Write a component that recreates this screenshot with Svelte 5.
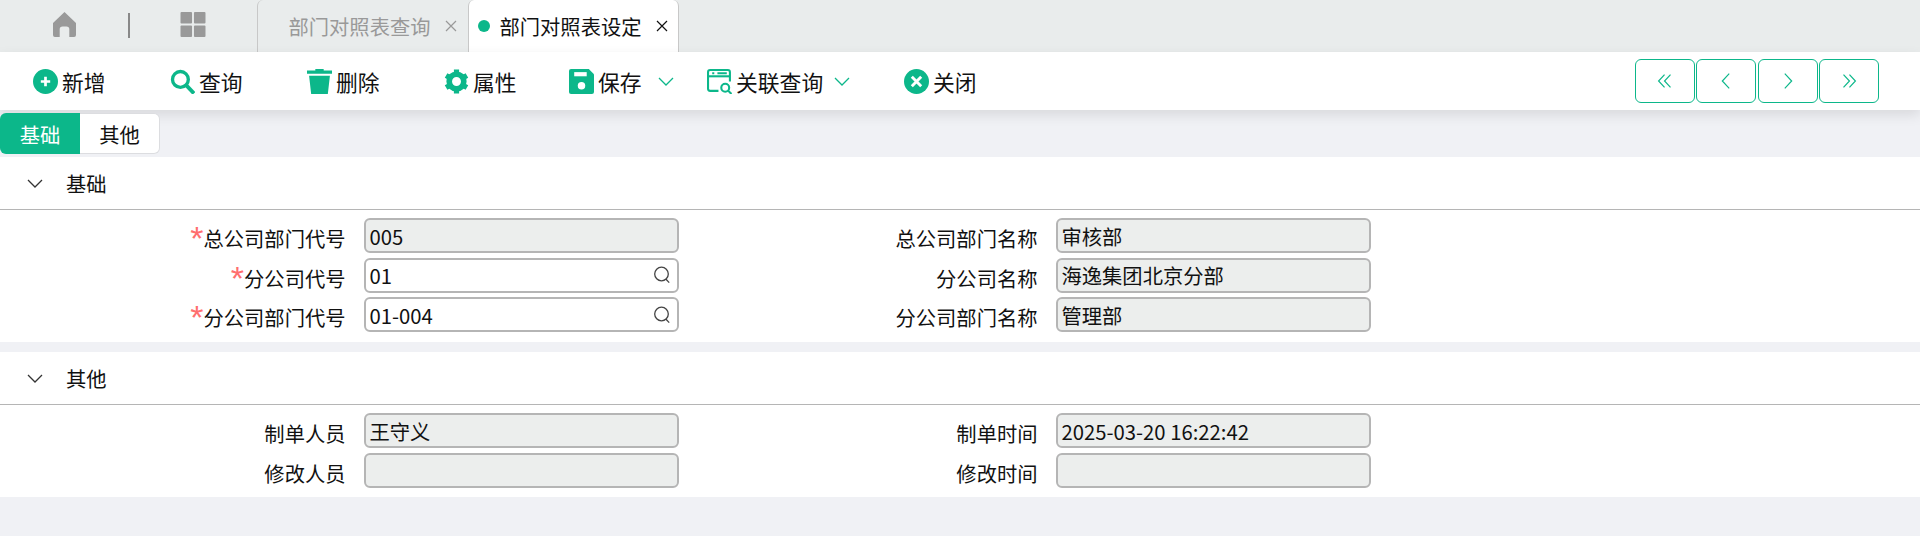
<script>
  // toolbar entries: width holds the slot each action takes in the bar
  const actions = [
    { key: 'add', label: '新增', width: 137 },
    { key: 'search', label: '查询', width: 137 },
    { key: 'trash', label: '删除', width: 137 },
    { key: 'gear', label: '属性', width: 125 },
    { key: 'save', label: '保存', width: 138, caret: true },
    { key: 'link', label: '关联查询', width: 197, caret: true },
    { key: 'close', label: '关闭', width: 90 },
  ]

  const pager = [
    'M11.5 5 5 12l6.5 7M18 5l-6.5 7 6.5 7',
    'M15.5 4 8 12l7.5 8',
    'M8.5 4l7.5 8-7.5 8',
    'M6 5l6.5 7L6 19M12.5 5l6.5 7-6.5 7',
  ]

  const baseFields = [
    { label: '总公司部门代号', value: '005', required: true, readonly: true },
    { label: '总公司部门名称', value: '审核部', readonly: true },
    { label: '分公司代号', value: '01', required: true, lookup: true },
    { label: '分公司名称', value: '海逸集团北京分部', readonly: true },
    { label: '分公司部门代号', value: '01-004', required: true, lookup: true },
    { label: '分公司部门名称', value: '管理部', readonly: true },
  ]

  const otherFields = [
    { label: '制单人员', value: '王守义', readonly: true },
    { label: '制单时间', value: '2025-03-20 16:22:42', readonly: true },
    { label: '修改人员', value: '', readonly: true },
    { label: '修改时间', value: '', readonly: true },
  ]

  const sections = [
    { title: '基础', fields: baseFields },
    { title: '其他', fields: otherFields },
  ]
</script>

{#snippet chevron(cls)}
  <svg class={cls} viewBox="0 0 16 9" fill="none" stroke="currentColor" stroke-width="1.3"><path d="M1 1l7 7 7-7" /></svg>
{/snippet}

{#snippet closeMark()}
  <svg class="x" viewBox="0 0 12 12" fill="none" stroke="currentColor" stroke-width="1.2"><path d="m1 1 10 10M11 1 1 11" /></svg>
{/snippet}

<div class="page">
  <header class="tabbar">
    <svg class="home" viewBox="0 0 24 26" fill="#999"><path d="M12 0 24 11.5V24a2 2 0 0 1-2 2h-5v-8a3 3 0 0 0-3-3h-4a3 3 0 0 0-3 3v8H2a2 2 0 0 1-2-2V11.5z" /></svg>
    <span class="divider"></span>
    <svg class="apps" viewBox="0 0 26 26" fill="#999">
      <rect width="12" height="12" rx="1" /><rect x="14" width="12" height="12" rx="1" />
      <rect y="14" width="12" height="12" rx="1" /><rect x="14" y="14" width="12" height="12" rx="1" />
    </svg>
    <div class="tab">
      <span>部门对照表查询</span>{@render closeMark()}
    </div>
    <div class="tab active">
      <i class="dot"></i><span>部门对照表设定</span>{@render closeMark()}
    </div>
  </header>

  <nav class="toolbar">
    {#each actions as a}
      <button class="action" style="width: {a.width}px">
        {#if a.key === 'add'}
          <svg class="icon" viewBox="0 0 24 24"><circle cx="12" cy="12" r="12" fill="#0cb78a" /><path d="M12 7.5v9M7.5 12h9" stroke="#fff" stroke-width="2.6" /></svg>
        {:else if a.key === 'search'}
          <svg class="icon" viewBox="0 0 24 24" fill="none" stroke="#0cb78a"><circle cx="10" cy="10" r="7.6" stroke-width="3.2" /><path d="M15.5 15.5 23 23.5" stroke-width="3.6" /></svg>
        {:else if a.key === 'trash'}
          <svg class="icon" viewBox="0 0 24 24" fill="#0cb78a"><path d="M8 0h8v1.5h8v3H0v-3h8zM2 6.5h20L20 24H4z" /></svg>
        {:else if a.key === 'gear'}
          <svg class="icon" viewBox="0 0 24 24" fill="none"><circle cx="12" cy="12" r="7" stroke="#0cb78a" stroke-width="5.4" /><path d="M12 .5v5M12 18.5v5M2 6.2l4.3 2.5M17.7 15.3 22 17.8M2 17.8l4.3-2.5M17.7 8.7 22 6.2" stroke="#0cb78a" stroke-width="5" /></svg>
        {:else if a.key === 'save'}
          <svg class="icon" viewBox="0 0 24 24"><path d="M2 0h17l5 5v17a2 2 0 0 1-2 2H2a2 2 0 0 1-2-2V2a2 2 0 0 1 2-2z" fill="#0cb78a" /><rect x="5" y="3" width="12" height="4" fill="#fff" /><circle cx="12" cy="16" r="3.6" fill="#fff" /></svg>
        {:else if a.key === 'link'}
          <svg class="icon" viewBox="0 0 24 24" fill="none" stroke="#0cb78a" stroke-width="2"><path d="M11 21H3a2 2 0 0 1-2-2V3a2 2 0 0 1 2-2h17a2 2 0 0 1 2 2v9" /><path d="M1 7h21" /><path d="M5 4h2M10 4h9" /><circle cx="17.5" cy="18" r="3.8" /><path d="m20.5 21 3 3" /></svg>
        {:else}
          <svg class="icon" viewBox="0 0 24 24"><circle cx="12" cy="12" r="12" fill="#0cb78a" /><path d="m7.5 7.5 9 9M16.5 7.5l-9 9" stroke="#fff" stroke-width="2.8" /></svg>
        {/if}
        <span class="action-label">{a.label}</span>
        {#if a.caret}
          {@render chevron(a.key === 'link' ? 'caret tight' : 'caret')}
        {/if}
      </button>
    {/each}
    <div class="pager">
      {#each pager as d}
        <button class="pager-btn" aria-label="page">
          <svg viewBox="0 0 24 24" fill="none" stroke="currentColor" stroke-width="1.3"><path {d} /></svg>
        </button>
      {/each}
    </div>
  </nav>

  <div class="subtabs">
    <button class="subtab on">基础</button>
    <button class="subtab">其他</button>
  </div>

  {#each sections as section}
    <section class="panel">
      <div class="panel-head">
        {@render chevron('fold')}
        <span>{section.title}</span>
      </div>
      <div class="form">
        {#each section.fields as f}
          <div class="label">
            {#if f.required}<em>*</em>{/if}{f.label}
          </div>
          <div class="input" class:readonly={f.readonly}>
            <span>{f.value}</span>
            {#if f.lookup}
              <svg viewBox="0 0 18 18" fill="none" stroke="#444" stroke-width="1.3"><circle cx="8.5" cy="8" r="6.8" /><path d="m12.8 13 3.4 3.6" /></svg>
            {/if}
          </div>
        {/each}
      </div>
    </section>
  {/each}
</div>

<style>
  :global(body) {
    margin: 0;
    background: #f0f1f5;
  }

  .page {
    height: 536px;
    overflow: hidden;
    font-family: 'Noto Sans CJK SC', 'Noto Sans', sans-serif;
    font-size: 20.3px;
    color: #111;
  }

  /* top tab strip */
  .tabbar {
    display: flex;
    align-items: flex-start;
    height: 52px;
    padding-left: 53px;
    background: #e9ecec;
    box-sizing: border-box;
  }
  .home {
    width: 23px;
    height: 25px;
    margin-top: 12px;
  }
  .divider {
    width: 1.5px;
    height: 25px;
    margin: 13px 50px 0 52px;
    background: #888;
  }
  .apps {
    width: 26px;
    height: 25px;
    margin-top: 12px;
    margin-right: 51px;
  }
  .tab {
    display: flex;
    align-items: center;
    width: 211px;
    height: 52px;
    padding-left: 31px;
    box-sizing: border-box;
    border-left: 1.5px solid #c8c8c8;
    border-radius: 6px 0 0 0;
    color: #999;
    white-space: nowrap;
    line-height: 50px;
  }
  .tab .x {
    flex: none;
    width: 12px;
    height: 12px;
    margin-left: 15px;
  }
  .tab.active {
    padding-left: 9px;
    background: #fff;
    color: #111;
    border-right: 1.5px solid #c8c8c8;
    border-radius: 6px 6px 0 0;
  }
  .dot {
    flex: none;
    width: 12px;
    height: 12px;
    margin-right: 10px;
    border-radius: 50%;
    background: #0cb78a;
  }

  /* action bar */
  .toolbar {
    position: relative;
    display: flex;
    align-items: center;
    height: 58px;
    padding: 0 41px 0 33px;
    background: #fff;
    box-shadow: 0 5px 12px rgba(0, 0, 0, 0.1);
  }
  .action {
    display: flex;
    align-items: center;
    flex: none;
    height: 40px;
    padding: 0;
    border: 0;
    background: none;
    font: inherit;
    font-size: 21.8px;
    color: #111;
  }
  .icon {
    flex: none;
    width: 25px;
    height: 25px;
    margin-right: 4px;
  }
  .caret {
    width: 16px;
    height: 9px;
    margin-left: 16px;
    color: #0cb78a;
  }
  .caret.tight {
    margin-left: 11px;
  }
  .pager {
    display: flex;
    gap: 1.5px;
    margin-left: auto;
  }
  .pager-btn {
    display: flex;
    align-items: center;
    justify-content: center;
    width: 60px;
    height: 44px;
    padding: 0;
    box-sizing: border-box;
    border: 1.5px solid #0cb78a;
    border-radius: 6px;
    background: #fff;
    color: #0cb78a;
  }
  .pager-btn svg {
    width: 22px;
    height: 22px;
  }

  /* form switcher */
  .subtabs {
    position: relative;
    display: flex;
    height: 41px;
    margin: 3px 0 3px;
  }
  .subtab {
    width: 80px;
    padding: 0;
    border: 1px solid #dcdde0;
    border-left: 0;
    border-radius: 0 6px 6px 0;
    background: #fff;
    font: inherit;
    color: #111;
  }
  .subtab.on {
    border: 0;
    border-radius: 6px 0 0 6px;
    background: #0cb78a;
    color: #fff;
  }

  /* collapsible sections */
  .panel {
    margin-bottom: 10px;
    padding-bottom: 10px;
    background: #fff;
  }
  .panel + .panel {
    padding-bottom: 9px;
  }
  .panel-head {
    display: flex;
    align-items: center;
    height: 52px;
    padding-left: 27px;
    border-bottom: 1px solid #b5b5b5;
  }
  .fold {
    width: 16px;
    height: 9px;
    margin-right: 23px;
    color: #333;
  }
  .form {
    display: grid;
    grid-template-columns: 345.5px 315px 341px 315px;
    column-gap: 18px;
    row-gap: 4.5px;
    padding-top: 8px;
  }
  .label {
    height: 35px;
    line-height: 40px;
    text-align: right;
    white-space: nowrap;
  }
  .label em {
    font-style: normal;
    font-family: 'Liberation Sans', sans-serif;
    font-size: 34px;
    line-height: 20px;
    vertical-align: -3px;
    color: #ff6f6f;
  }
  .input {
    display: flex;
    align-items: center;
    justify-content: space-between;
    height: 35px;
    padding: 0 6px 0 4px;
    box-sizing: border-box;
    border: 2px solid #b5b5b5;
    border-radius: 6px;
    background: #fff;
    line-height: 30px;
  }
  .input.readonly {
    background: #eceeed;
  }
  .input svg {
    width: 18px;
    height: 18px;
  }
</style>
